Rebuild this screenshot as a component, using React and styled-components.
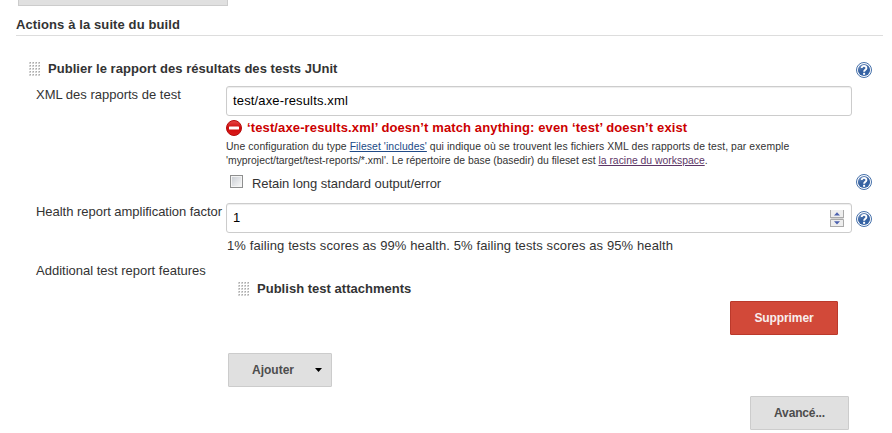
import React from 'react';
import styled, { createGlobalStyle } from 'styled-components';

const GlobalStyle = createGlobalStyle`
  * { box-sizing: border-box; }
  body {
    margin: 0;
    overflow: hidden;
    background: #fff;
    color: #333;
    font: 13px/18px "Liberation Sans", Arial, sans-serif;
  }
`;

const Page = styled.main`
  width: 892px;
  height: 433px;
  overflow: hidden;
  display: flex;
  flex-direction: column;
`;

const ButtonEdge = styled.div`
  flex: none;
  width: 210px;
  height: 6px;
  margin-left: 18px;
  background: #e0e0e0;
  border: 1px solid #ccc;
  border-top: 0;
`;

const SectionTitle = styled.h2`
  margin: 10px 9px 0 16px;
  height: 20px;
  flex: none;
  border-bottom: 1px solid #ddd;
  font-size: 13px;
  line-height: 18px;
  letter-spacing: 0.11px;
`;

const Row = styled.div`
  flex: none;
  display: grid;
  grid-template-columns: 190px 626px 1fr;
  height: ${(p) => p.$height}px;
  padding-left: 36px;
`;

const TitleRow = styled.div`
  flex: none;
  display: flex;
  align-items: flex-start;
  height: 26px;
  margin-top: 24px;
  padding: 0 20px 0 29px;
`;

const Label = styled.span`
  white-space: nowrap;
  letter-spacing: ${(p) => p.$spacing || 0}px;
`;

const Strong = styled.strong`
  white-space: nowrap;
  letter-spacing: ${(p) => p.$spacing || 0}px;
`;

const GripSvg = styled.svg`
  flex: none;
  width: 12px;
  height: 14px;
  margin: 2px 7px 0 0;
`;

const HelpSvg = styled.svg`
  display: block;
  width: 16px;
  height: 16px;
  margin: ${(p) => p.$margin || '0'};
`;

const Field = styled.div`
  display: flex;
  align-items: center;
  justify-content: space-between;
  height: 30px;
  padding: 0 7px 0 6px;
  border: 1px solid #ccc;
  border-radius: 3px;
  box-shadow: inset 0 1px 1px rgba(0, 0, 0, 0.075);
  color: #000;
  letter-spacing: 0.15px;
`;

const Spinner = styled.svg`
  width: 14px;
  height: 17px;
`;

const ErrorLine = styled.div`
  flex: none;
  display: flex;
  align-items: center;
  height: 22px;
  margin: 1px 0 0 226px;
  gap: 5px;
  color: #c00;
  font-weight: bold;
  white-space: nowrap;
  letter-spacing: 0.125px;
`;

const Hint = styled.div`
  flex: none;
  height: 31px;
  padding-top: 1px;
  margin-left: 226px;
  font-size: 10.4px;
  line-height: 14px;
`;

const HintLine = styled.div`
  white-space: nowrap;
  letter-spacing: ${(p) => p.$spacing || 0}px;
`;

const Link = styled.a`
  color: ${(p) => (p.$visited ? '#5c3566' : '#204a87')};
  text-decoration: underline;
`;

const CheckLine = styled.div`
  grid-column: 2;
  display: flex;
  align-items: flex-start;
  gap: 9px;
  padding: 5px 0 0 4px;
`;

const Checkbox = styled.span`
  width: 13px;
  height: 13px;
  border: 1px solid #8e8f8f;
  background: linear-gradient(135deg, #cbcfd5, #f6f6f6) content-box, #f4f4f4;
  padding: 1px;
`;

const Caption = styled.div`
  flex: none;
  height: 29px;
  padding-top: 4px;
  margin-left: 227px;
  letter-spacing: 0.107px;
`;

const Attachment = styled.div`
  display: flex;
  align-items: flex-start;
  padding: 18px 0 0 12px;
`;

const Button = styled.button`
  flex: none;
  display: flex;
  align-items: center;
  justify-content: center;
  width: ${(p) => p.$width}px;
  height: 34px;
  padding: 0;
  margin: ${(p) => p.$margin};
  border: 1px solid ${(p) => (p.$danger ? '#bb392b' : '#ccc')};
  border-radius: 1px;
  background: ${(p) => (p.$danger ? '#d24939' : '#e0e0e0')};
  color: ${(p) => (p.$danger ? '#f8eeee' : '#4d4d4d')};
  font: bold 12px/16px "Liberation Sans", Arial, sans-serif;
  letter-spacing: ${(p) => p.$spacing || 0}px;
`;

const Caret = styled.svg`
  width: 7px;
  height: 4px;
  margin: 0 -14px 0 21px;
`;

const Grip = () => (
  <GripSvg viewBox="0 0 12 14" shapeRendering="crispEdges">
    {[0, 3, 6, 9].map((x) =>
      [0, 3, 6, 9, 12].map((y) => (
        <React.Fragment key={`${x}-${y}`}>
          <rect x={x} y={y} width="2" height="2" fill="#d4d4d4" />
          <rect x={x + 1} y={y} width="1" height="1" fill="#aaa" />
        </React.Fragment>
      ))
    )}
  </GripSvg>
);

const Help = ({ margin }) => (
  <HelpSvg viewBox="0 0 16 16" $margin={margin}>
    <defs>
      <linearGradient id="helpFill" x1="0" y1="0" x2="0.6" y2="1">
        <stop offset="0" stopColor="#7d9bc8" />
        <stop offset="0.55" stopColor="#35609f" />
        <stop offset="1" stopColor="#3565a8" />
      </linearGradient>
    </defs>
    <circle cx="8" cy="8" r="7.5" fill="#fff" stroke="#4570aa" strokeWidth="1" />
    <circle cx="8" cy="8" r="6.1" fill="url(#helpFill)" />
    <path d="M5.7 6.1C5.7 3 10.6 3.2 10.4 6.1C10.3 7.8 8.1 7.6 8.1 9.8" fill="none" stroke="#fff" strokeWidth="1.9" />
    <rect x="7.1" y="10.8" width="2" height="2" fill="#fff" />
  </HelpSvg>
);

const ErrorIcon = () => (
  <svg width="16" height="16" viewBox="0 0 16 16">
    <defs>
      <linearGradient id="stopFill" x1="0" y1="0" x2="0" y2="1">
        <stop offset="0" stopColor="#e84a4a" />
        <stop offset="0.5" stopColor="#cc0a0a" />
        <stop offset="1" stopColor="#dc1c1c" />
      </linearGradient>
    </defs>
    <circle cx="8" cy="8" r="7.5" fill="url(#stopFill)" stroke="#b50b0b" />
    <rect x="3" y="6.5" width="10" height="3" rx="0.5" fill="#fff" />
  </svg>
);

export default function App() {
  return (
    <>
      <GlobalStyle />
      <Page>
        <ButtonEdge />
        <SectionTitle>Actions à la suite du build</SectionTitle>
        <TitleRow>
          <Grip />
          <Strong $spacing={0.04}>Publier le rapport des résultats des tests JUnit</Strong>
          <Help margin="2px 0 0 auto" />
        </TitleRow>
        <Row $height={30}>
          <Label>XML des rapports de test</Label>
          <Field>test/axe-results.xml</Field>
        </Row>
        <ErrorLine>
          <ErrorIcon />
          <span>‘test/axe-results.xml’ doesn’t match anything: even ‘test’ doesn’t exist</span>
        </ErrorLine>
        <Hint>
          <HintLine $spacing={0.09}>
            Une configuration du type <Link>Fileset 'includes'</Link> qui indique où se trouvent les fichiers XML des rapports de test, par exemple
          </HintLine>
          <HintLine>
            'myproject/target/test-reports/*.xml'. Le répertoire de base (basedir) du fileset est <Link $visited>la racine du workspace</Link>.
          </HintLine>
        </Hint>
        <Row $height={33}>
          <CheckLine>
            <Checkbox />
            <Label $spacing={-0.05}>Retain long standard output/error</Label>
          </CheckLine>
          <Help margin="4px 0 0 4px" />
        </Row>
        <Row $height={30}>
          <Label $spacing={-0.03}>Health report amplification factor</Label>
          <Field>
            <span>1</span>
            <Spinner viewBox="0 0 14 17">
              <path d="M.5 0V8H13.5V0M.5 17V9.5H13.5V17" fill="#eee" stroke="#aaa" />
              <path d="M.5 7.5H13.5M.5 16.5H13.5" stroke="#aaa" />
              <path d="M4 5.5L7 2.3L10 5.5ZM4 11.3L7 14.5L10 11.3Z" fill="#4d62ae" />
            </Spinner>
          </Field>
          <Help margin="8px 0 0 4px" />
        </Row>
        <Caption>1% failing tests scores as 99% health. 5% failing tests scores as 95% health</Caption>
        <Row $height={39}>
          <Label>Additional test report features</Label>
          <Attachment>
            <Grip />
            <Strong $spacing={0.02}>Publish test attachments</Strong>
          </Attachment>
        </Row>
        <Button $danger $width={108} $margin="0 0 0 730px" $spacing={-0.1}>Supprimer</Button>
        <Button $width={104} $margin="18px 0 0 228px">
          Ajouter
          <Caret viewBox="0 0 7 4"><path d="M0 0H7L3.5 4Z" fill="#000" /></Caret>
        </Button>
        <Button $width={99} $margin="9px 0 0 750px" $spacing={-0.15}>Avancé...</Button>
      </Page>
    </>
  );
}
